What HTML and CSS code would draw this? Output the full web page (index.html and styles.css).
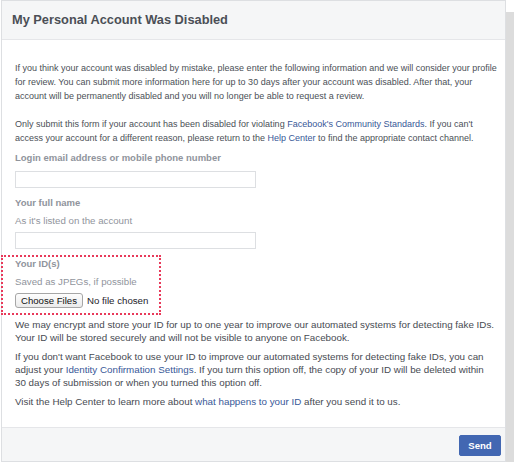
FILE: index.html
```html
<!DOCTYPE html>
<html lang="en">
<head>
<meta charset="utf-8">
<title>My Personal Account Was Disabled</title>
<link rel="stylesheet" href="styles.css">
</head>
<body>
<div class="card">
  <div class="card-header">
    <h1 class="title">My Personal Account Was Disabled</h1>
  </div>
  <div class="card-body">
    <p class="intro">If you think your account was disabled by mistake, please enter the following information and we will consider your profile for review. You can submit more information here for up to 30 days after your account was disabled. After that, your account will be permanently disabled and you will no longer be able to request a review.</p>
    <p class="intro gap">Only submit this form if your account has been disabled for violating <a href="#">Facebook's Community Standards</a>. If you can't access your account for a different reason, please return to the <a href="#">Help Center</a> to find the appropriate contact channel.</p>

    <label class="field-label first" for="login">Login email address or mobile phone number</label>
    <input class="text-input after-label" id="login" type="text">

    <label class="field-label second" for="name">Your full name</label>
    <div class="hint">As it's listed on the account</div>
    <input class="text-input after-hint" id="name" type="text">

    <div class="id-box">
      <div class="field-label">Your ID(s)</div>
      <div class="hint">Saved as JPEGs, if possible</div>
      <div class="file-row">
        <button class="file-btn" type="button">Choose Files</button>
        <span class="file-status">No file chosen</span>
      </div>
    </div>

    <p class="note first-note">We may encrypt and store your ID for up to one year to improve our automated systems for detecting fake IDs. Your ID will be stored securely and will not be visible to anyone on Facebook.</p>
    <p class="note narrow">If you don't want Facebook to use your ID to improve our automated systems for detecting fake IDs, you can adjust your <a href="#">Identity Confirmation Settings</a>. If you turn this option off, the copy of your ID will be deleted within 30 days of submission or when you turned this option off.</p>
    <p class="note">Visit the Help Center to learn more about <a href="#">what happens to your ID</a> after you send it to us.</p>
  </div>
  <div class="card-footer">
    <button class="send-btn" type="button">Send</button>
  </div>
</div>
</body>
</html>
```

FILE: styles.css
```css
html, body {
  margin: 0;
  padding: 0;
  background: #ffffff;
}

body {
  font-family: "Liberation Sans", Arial, Helvetica, sans-serif;
  color: #4b4f56;
  overflow: hidden;
}

.card {
  margin-left: 1px;
  width: 505px;
  box-sizing: border-box;
  border: 1px solid #dddfe2;
  background: #ffffff;
  box-shadow: 8px 12px 0 #dcdcdc;
}

.card-header {
  height: 38px;
  background: #f5f6f7;
  border-bottom: 1px solid #e5e6e9;
}

.title {
  margin: 0;
  padding-left: 10px;
  font-size: 12.8px;
  line-height: 38px;
  font-weight: bold;
  color: #4b4f56;
}

.card-body {
  display: flex;
  flex-direction: column;
  align-items: flex-start;
  padding: 21px 7px 19.5px 13px;
}

.intro {
  margin: 0;
  width: 483px;
  font-size: 9px;
  line-height: 14px;
  color: #4b4f56;
}

.intro.gap {
  margin-top: 14px;
}

a {
  color: #385898;
  text-decoration: none;
}

.field-label {
  display: block;
  font-size: 9.5px;
  line-height: 14px;
  font-weight: bold;
  color: #90949c;
}

.field-label.first {
  margin-top: 6px;
}

.field-label.second {
  margin-top: 8px;
}

.hint {
  margin-top: 4px;
  font-size: 9.7px;
  line-height: 14px;
  color: #90949c;
}

.text-input {
  display: block;
  width: 241px;
  height: 17px;
  box-sizing: border-box;
  margin: 0;
  padding: 0 4px;
  border: 1px solid #dddfe2;
  border-radius: 0;
  background: #ffffff;
  font: 9.5px "Liberation Sans", Arial, sans-serif;
}

.text-input.after-label {
  margin-top: 6px;
}

.text-input.after-hint {
  margin-top: 4px;
}

.id-box {
  margin-top: 6px;
  margin-left: -14px;
  width: 160px;
  box-sizing: border-box;
  padding: 0 0 5px 12px;
  border: 2px dotted #e8395a;
}

.file-row {
  display: flex;
  align-items: center;
  gap: 4px;
  margin-top: 4px;
  height: 15px;
}

.file-btn {
  width: 68px;
  height: 15px;
  margin: 0;
  padding: 0;
  box-sizing: border-box;
  border: 1px solid #a6a6a6;
  border-radius: 3px;
  background: linear-gradient(#fdfdfd, #ebebeb);
  font: 9.6px "Liberation Sans", Arial, sans-serif;
  color: #111111;
  line-height: 13px;
}

.file-status {
  font-size: 9.7px;
  color: #1d2129;
  line-height: 15px;
}

.note {
  margin: 6px 0 0 0;
  width: 483px;
  font-size: 9.8px;
  line-height: 13px;
  color: #474b52;
}

.note.first-note {
  margin-top: 2.5px;
}

.note.narrow {
  width: 473px;
}

.card-footer {
  display: flex;
  justify-content: flex-end;
  padding: 7px 4px 5px 0;
  background: #f5f6f7;
  border-top: 1px solid #e5e6e9;
}

.send-btn {
  width: 42px;
  height: 21px;
  margin: 0;
  padding: 0;
  box-sizing: border-box;
  border: 1px solid #4267b2;
  border-radius: 2px;
  background: #4267b2;
  color: #ffffff;
  font: bold 9.6px "Liberation Sans", Arial, sans-serif;
}
```
